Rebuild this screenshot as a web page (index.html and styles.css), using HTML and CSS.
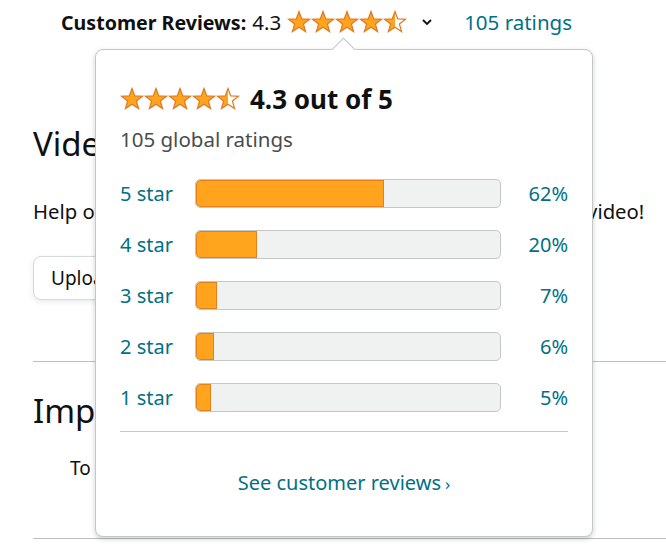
FILE: index.html
```html
<!DOCTYPE html>
<html>
<head>
<meta charset="utf-8">
<link rel="stylesheet" href="styles.css">
</head>
<body>
<svg class="defs" width="0" height="0">
  <defs>
    <linearGradient id="half" x1="0" x2="1" y1="0" y2="0">
      <stop offset="50%" stop-color="#ffa41c"/>
      <stop offset="50%" stop-color="#ffffff"/>
    </linearGradient>
    <path id="star" d="M12 1.5 L14.75 8.9 L22.5 9.2 L16.4 14 L18.6 21.6 L12 17.2 L5.4 21.6 L7.6 14 L1.5 9.2 L9.25 8.9 Z"/>
  </defs>
</svg>
<div class="topline">
  <span class="cr-label">Customer Reviews:</span>
  <span class="cr-num">4.3</span>
  <svg class="stars" width="120" height="24" viewBox="0 0 120 24">
    <use href="#star" x="0" class="full"/>
    <use href="#star" x="24" class="full"/>
    <use href="#star" x="48" class="full"/>
    <use href="#star" x="72" class="full"/>
    <use href="#star" x="96" class="halfstar"/>
  </svg>
  <svg class="chev" width="12" height="8" viewBox="0 0 12 8"><path d="M2 2 L6 6 L10 2" fill="none" stroke="#0f1111" stroke-width="1.8"/></svg>
  <span class="cr-link">105 ratings</span>
</div>

<div class="page">
  <h2 class="heading">Videos</h2>
  <p class="help">Help others learn more about this product by uploading a video!</p>
  <button class="upload">Upload your video</button>
  <hr class="rule">
  <h2 class="heading heading2">Important information</h2>
  <p class="info">To report an issue with this product, click here.</p>
  <hr class="rule rule2">
</div>

<div class="popover">
  <div class="arrow"></div>
  <div class="pop-head">
    <svg class="stars" width="120" height="24" viewBox="0 0 120 24">
      <use href="#star" x="0" class="full"/>
      <use href="#star" x="24" class="full"/>
      <use href="#star" x="48" class="full"/>
      <use href="#star" x="72" class="full"/>
      <use href="#star" x="96" class="halfstar"/>
    </svg>
    <span class="out-of">4.3 out of 5</span>
  </div>
  <div class="global">105 global ratings</div>
  <div class="rows">
    <div class="row"><span class="lbl">5 star</span><div class="bar"><div class="fill" style="width:62%"></div></div><span class="pct">62%</span></div>
    <div class="row"><span class="lbl">4 star</span><div class="bar"><div class="fill" style="width:20%"></div></div><span class="pct">20%</span></div>
    <div class="row"><span class="lbl">3 star</span><div class="bar"><div class="fill" style="width:7%"></div></div><span class="pct">7%</span></div>
    <div class="row"><span class="lbl">2 star</span><div class="bar"><div class="fill" style="width:6%"></div></div><span class="pct">6%</span></div>
    <div class="row"><span class="lbl">1 star</span><div class="bar"><div class="fill" style="width:5%"></div></div><span class="pct">5%</span></div>
  </div>
  <div class="sep"></div>
  <div class="see">See customer reviews<span class="caret">›</span></div>
</div>
</body>
</html>
```
FILE: styles.css
```css
html, body {
  margin: 0;
  padding: 0;
  background: #fff;
}
body {
  width: 666px;
  height: 558px;
  overflow: hidden;
  position: relative;
  font-family: "Noto Sans", "Open Sans", sans-serif;
  color: #0f1111;
}
.defs { position: absolute; }
.full { fill: #ffa41c; stroke: #de7921; stroke-width: 1.2; }
.halfstar { fill: url(#half); stroke: #de7921; stroke-width: 1.2; }

.topline {
  display: flex;
  align-items: center;
  height: 44px;
  padding-left: 61px;
  font-size: 20.5px;
}
.cr-label { font-weight: 700; font-size: 19.6px; }
.cr-num { margin-left: 6px; }
.stars { display: block; }
.topline .stars { margin-left: 6px; }
.chev { margin-left: 14px; }
.cr-link { margin-left: 31px; color: #007185; }

.page {
  padding-left: 33px;
}
.heading {
  margin: 80px 0 0;
  font-size: 33px;
  font-weight: 400;
  line-height: 40px;
}
.help {
  margin: 35px 0 0;
  font-size: 20.3px;
  line-height: 24px;
}
.upload {
  margin-top: 33px;
  height: 44px;
  padding: 0 17px;
  border: 1px solid #d5d9d9;
  border-radius: 8px;
  background: #fff;
  font-family: inherit;
  font-size: 19px;
  color: #0f1111;
  box-shadow: 0 2px 5px rgba(213,217,217,.5);
}
.rule {
  margin: 61px 0 0;
  border: 0;
  border-top: 1px solid #bbbfbf;
}
.heading2 { margin-top: 29px; }
.info {
  margin: 25px 0 0 37px;
  font-size: 19px;
  line-height: 24px;
}
.rule2 { margin-top: 58px; }

.popover {
  position: absolute;
  left: 95px;
  top: 49px;
  width: 496px;
  height: 486px;
  background: #fff;
  border: 1px solid #c4c7c7;
  border-radius: 8px;
  box-shadow: 0 2px 5px rgba(15,17,17,.2);
}
.arrow {
  position: absolute;
  left: 239px;
  top: -9px;
  width: 16px;
  height: 16px;
  background: #fff;
  border-left: 1px solid #c4c7c7;
  border-top: 1px solid #c4c7c7;
  transform: rotate(45deg);
}
.pop-head {
  display: flex;
  align-items: center;
  margin: 31px 0 0 24px;
}
.out-of {
  margin-left: 10px;
  font-size: 26px;
  font-weight: 700;
}
.global {
  margin: 8px 0 0 24px;
  font-size: 20.5px;
  line-height: 28px;
  color: #494d4d;
}
.rows {
  margin: 26px 24px 0 24px;
  display: flex;
  flex-direction: column;
  gap: 22px;
}
.row {
  display: flex;
  align-items: center;
  height: 29px;
  color: #007185;
  font-size: 20px;
}
.lbl { width: 75px; }
.bar {
  width: 304px;
  height: 27px;
  border: 1px solid #c5c7c7;
  border-radius: 5px;
  background: #f0f2f2;
  overflow: hidden;
  display: flex;
}
.fill {
  background: #ffa41c;
  box-shadow: inset 0 0 0 1px #e5811b;
  border-radius: 5px 0 0 5px;
}
.pct { flex: 1; text-align: right; }
.sep {
  margin: 19px 24px 0;
  border-top: 1px solid #c5c7c7;
}
.see {
  margin-top: 37px;
  text-align: center;
  color: #007185;
  font-size: 20px;
}
.caret { margin-left: 4px; font-size: 17px; }
```
